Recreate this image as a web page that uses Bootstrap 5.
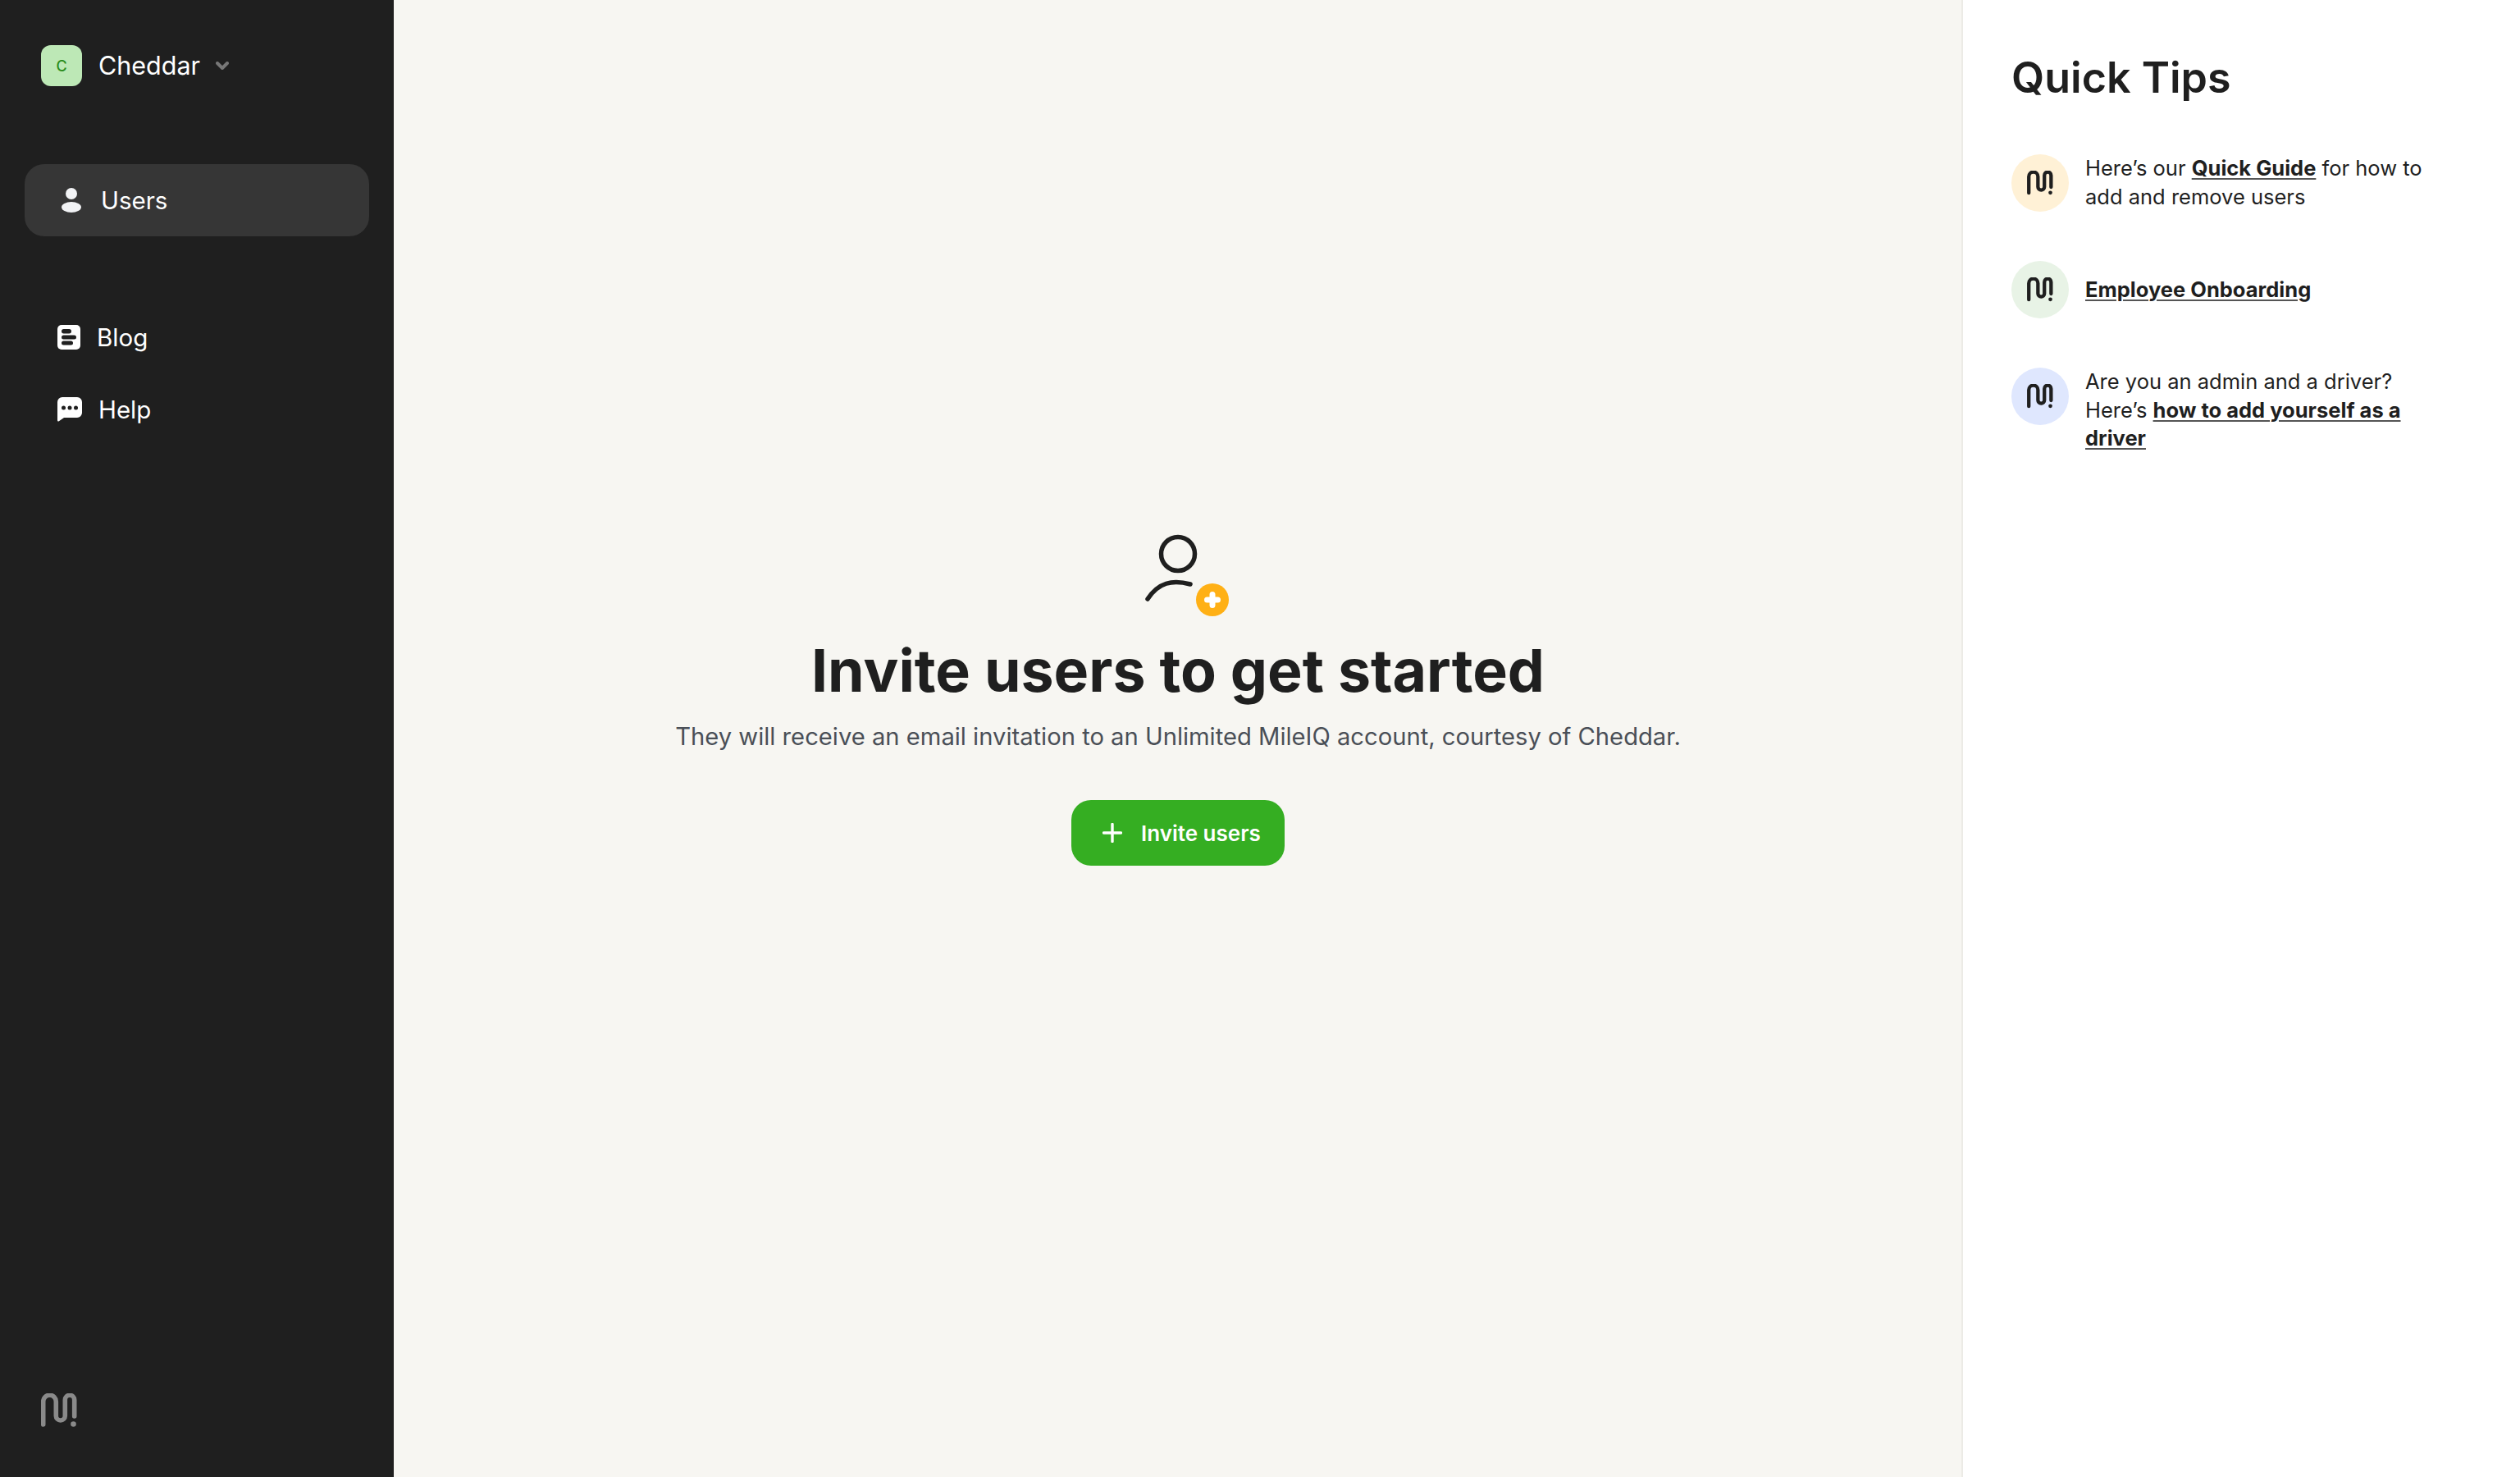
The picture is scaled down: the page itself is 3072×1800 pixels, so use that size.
<!DOCTYPE html>
<html lang="en">
<head>
  <meta charset="UTF-8" />
  <title>Users</title>
  <link rel="stylesheet" href="https://cdn.jsdelivr.net/npm/bootstrap@5.3.3/dist/css/bootstrap.min.css" />
  <style>
    html, body { height: 100%; }
    body { font-family: Inter, "Liberation Sans", sans-serif; color: #1f1f1f; background: #f7f6f2; }
    .app-shell { height: 1800px; }
    .side-bar { width: 480px; background: #1f1f1f; color: #fff; padding: 55px 30px 60px; }
    .org-row { padding-left: 20px; height: 50px; font-size: 30.5px; }
    .org-avatar { width: 50px; height: 50px; border-radius: 12px; background: #bde8b6; color: #2a8c1a; font-size: 18px; font-weight: 500; margin-right: 20px; }
    .org-chevron { margin-left: 19px; }
    .nav-active { height: 88px; margin-top: 95px; margin-bottom: 79px; padding-left: 45px; background: #363636; border-radius: 24px; font-size: 29.5px; }
    .nav-active svg { margin-right: 24px; }
    .nav-plain { height: 88px; padding-left: 40px; font-size: 29.5px; color: #fff; }
    .nav-plain svg { margin-right: 20px; }
    .side-logo { margin-left: 20px; color: #8a8a8a; stroke-width: 5.6; }
    .main-area { background: #f7f6f2; padding-top: 650px; padding-left: 1px; }
    .invite-title { font-size: 71.6px; font-weight: 700; line-height: 90px; margin: 20px 0 0; color: #1f1f1f; }
    .invite-sub { font-size: 29.2px; line-height: 40px; color: #4a4f57; margin: 16px 0 0; }
    .invite-btn { width: 260px; height: 80px; margin-top: 57px; background: #35ae22; border: 0; border-radius: 24px; color: #fff; font-size: 26px; font-weight: 600; padding: 0 0 0 38px; }
    .invite-btn:hover { background: #35ae22; color: #fff; }
    .invite-btn svg { margin-right: 23px; }
    .tips-panel { width: 681px; background: #fff; border-left: 2px solid #ecebe6; padding: 61px 60px 0 59px; }
    .tips-title { font-size: 52px; font-weight: 600; line-height: 68px; margin: 0 0 59px; }
    .tip-row { margin-bottom: 60px; }
    .tip-dot { width: 70px; height: 70px; border-radius: 50%; margin-right: 20px; color: #1f1f1f; stroke-width: 6; }
    .dot-cream { background: #fff1d6; }
    .dot-green { background: #e8f3e6; }
    .dot-blue { background: #dfe7fe; }
    .tip-text { font-size: 25.5px; line-height: 34.5px; width: 440px; }
    .tip-text a { color: #1f1f1f; font-weight: 700; text-decoration-color: #555; text-decoration-thickness: 2px; text-underline-offset: 3px; }
  </style>
</head>
<body>

  <svg width="0" height="0" class="d-block position-absolute">
    <symbol id="logo-m" viewBox="0 0 44 42">
      <path d="M2.7 38V10a7.8 7.8 0 0 1 15.6 0V27.5a5.5 5.5 0 0 0 11 0V8a5.7 5.7 0 0 1 11.4 0V28" fill="none" stroke="currentColor" stroke-linecap="round" />
      <circle cx="39.5" cy="37.5" r="3.3" fill="currentColor" />
    </symbol>
  </svg>

  <div class="app-shell d-flex">
    <aside class="side-bar d-flex flex-column flex-shrink-0">
      <div class="org-row d-flex align-items-center">
        <span class="org-avatar d-flex align-items-center justify-content-center">C</span>
        <span>Cheddar</span>
        <svg class="org-chevron" width="16" height="10" viewBox="0 0 16 10"><path d="M2 2l6 6 6-6" fill="none" stroke="#777" stroke-width="4" stroke-linecap="round" stroke-linejoin="round" /></svg>
      </div>

      <div class="nav-active d-flex align-items-center">
        <svg width="24" height="30" viewBox="0 0 24 30"><circle cx="12" cy="7" r="7" fill="#f2f3f5" /><ellipse cx="12" cy="23.5" rx="12" ry="6.5" fill="#f2f3f5" /></svg>
        <span>Users</span>
      </div>

      <a class="nav-plain d-flex align-items-center text-decoration-none" href="#">
        <svg width="28" height="30" viewBox="0 0 28 30"><rect width="28" height="30" rx="5" fill="#fff" /><rect x="5" y="5" width="12" height="5.5" rx="2.7" fill="#1f1f1f" /><rect x="5" y="12.5" width="18" height="5" rx="2.5" fill="#1f1f1f" /><rect x="5" y="19.5" width="14" height="5" rx="2.5" fill="#1f1f1f" /></svg>
        <span>Blog</span>
      </a>
      <a class="nav-plain d-flex align-items-center text-decoration-none" href="#">
        <svg width="30" height="30" viewBox="0 0 30 30"><path d="M6 0H24a6 6 0 0 1 6 6V19a6 6 0 0 1-6 6H8L1.5 29.5Q0 30 0 28V6A6 6 0 0 1 6 0Z" fill="#fff" /><circle cx="7.5" cy="13" r="2.5" fill="#1f1f1f" /><circle cx="15" cy="13" r="2.5" fill="#1f1f1f" /><circle cx="22.5" cy="13" r="2.5" fill="#1f1f1f" /></svg>
        <span>Help</span>
      </a>

      <svg class="side-logo mt-auto" width="44" height="42"><use href="#logo-m" /></svg>
    </aside>

    <main class="main-area flex-grow-1 d-flex flex-column align-items-center">
      <svg width="128" height="102" viewBox="0 0 128 102">
        <circle cx="64" cy="25" r="20.5" fill="none" stroke="#1f1f1f" stroke-width="5.5" />
        <path d="M27 80C40 60 57 56 79 62" fill="none" stroke="#1f1f1f" stroke-width="5.5" stroke-linecap="round" />
        <circle cx="106" cy="81" r="20" fill="#ffb015" />
        <path d="M106 74.5v13M99.5 81h13" stroke="#fff" stroke-width="7" stroke-linecap="round" />
      </svg>
      <h1 class="invite-title">Invite users to get started</h1>
      <p class="invite-sub">They will receive an email invitation to an Unlimited MileIQ account, courtesy of Cheddar.</p>
      <button class="btn invite-btn d-flex align-items-center" type="button">
        <svg width="24" height="24" viewBox="0 0 24 24"><path d="M12 1.5v21M1.5 12h21" stroke="#fff" stroke-width="3.4" stroke-linecap="round" /></svg>
        <span>Invite users</span>
      </button>
    </main>

    <aside class="tips-panel flex-shrink-0">
      <h2 class="tips-title">Quick Tips</h2>
      <div class="tip-row d-flex">
        <span class="tip-dot dot-cream d-flex align-items-center justify-content-center flex-shrink-0"><svg width="32" height="30"><use href="#logo-m" /></svg></span>
        <div class="tip-text">Here’s our <a href="#">Quick Guide</a> for how to add and remove users</div>
      </div>
      <div class="tip-row d-flex align-items-center">
        <span class="tip-dot dot-green d-flex align-items-center justify-content-center flex-shrink-0"><svg width="32" height="30"><use href="#logo-m" /></svg></span>
        <div class="tip-text"><a href="#">Employee Onboarding</a></div>
      </div>
      <div class="tip-row d-flex">
        <span class="tip-dot dot-blue d-flex align-items-center justify-content-center flex-shrink-0"><svg width="32" height="30"><use href="#logo-m" /></svg></span>
        <div class="tip-text">Are you an admin and a driver? Here’s <a href="#">how to add yourself as a driver</a></div>
      </div>
    </aside>
  </div>

  <script src="https://cdn.jsdelivr.net/npm/bootstrap@5.3.3/dist/js/bootstrap.bundle.min.js"></script>
</body>
</html>
